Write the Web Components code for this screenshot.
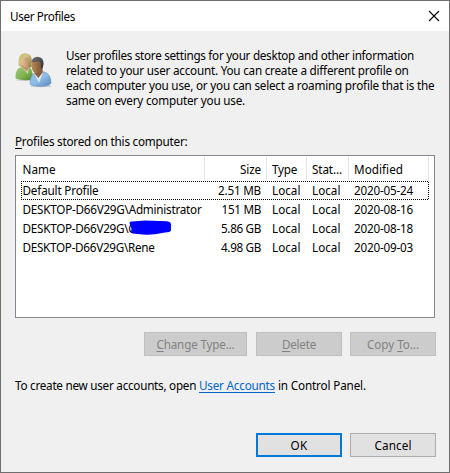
<!DOCTYPE html>
<html lang="en">
<head>
<meta charset="utf-8">
<title>User Profiles</title>
<style>
html,body{margin:0;padding:0;width:450px;height:473px;overflow:hidden;background:#f0f0f0}
</style>
</head>
<body>
<profiles-dialog></profiles-dialog>
<script>
const shadow = (el, html) => { el.attachShadow({mode: 'open'}).innerHTML = html; };

/* A run of text tracked so that it fills the width given in "w". */
customElements.define('ui-text', class extends HTMLElement {
  connectedCallback() {
    if (this.shadowRoot) return;
    shadow(this, '<style>:host{display:inline-block;white-space:pre;line-height:inherit}</style><span><slot></slot></span>');
    const w = +this.getAttribute('w');
    if (!w) return;
    const natural = this.shadowRoot.querySelector('span').getBoundingClientRect().width;
    this.style.letterSpacing = ((w - natural) / this.textContent.length).toFixed(3) + 'px';
  }
});

customElements.define('title-bar', class extends HTMLElement {
  connectedCallback() {
    shadow(this, `<style>
      :host{display:flex;align-items:center;justify-content:space-between;height:30px;background:#fff;padding:0 9px 0 9px;box-sizing:border-box}
      svg{display:block}
    </style><slot></slot>
    <svg width="12" height="12" viewBox="0 0 12 12"><path d="M1 1L11 11M11 1L1 11" stroke="#000" stroke-width="1.1" fill="none"/></svg>`);
  }
});

customElements.define('users-icon', class extends HTMLElement {
  connectedCallback() {
    shadow(this, `<style>:host{display:block;width:40px;height:38px}svg{display:block}</style>
    <svg width="40" height="38" viewBox="0 0 40 38">
      <defs>
        <linearGradient id="g" x1="0" y1="0" x2="1" y2="1"><stop offset="0" stop-color="#a5cb7c"/><stop offset=".6" stop-color="#7cb04c"/><stop offset="1" stop-color="#4d7c2b"/></linearGradient>
        <linearGradient id="b" x1="0" y1="0" x2="1" y2="1"><stop offset="0" stop-color="#8fbbe8"/><stop offset=".5" stop-color="#90bce8"/><stop offset="1" stop-color="#5686b8"/></linearGradient>
        <linearGradient id="h" x1="0" y1="0" x2="1" y2="1"><stop offset="0" stop-color="#c9b768"/><stop offset=".4" stop-color="#d3c48a"/><stop offset="1" stop-color="#8c7630"/></linearGradient>
        <linearGradient id="f" x1="0" y1="0" x2="1" y2="0"><stop offset="0" stop-color="#e6bd98"/><stop offset="1" stop-color="#b98d68"/></linearGradient>
        <linearGradient id="m" x1="0" y1="0" x2="1" y2="0"><stop offset="0" stop-color="#b98858"/><stop offset="1" stop-color="#795233"/></linearGradient>
        <linearGradient id="d" x1="0" y1="0" x2="1" y2="1"><stop offset="0" stop-color="#747474"/><stop offset="1" stop-color="#2e2e2e"/></linearGradient>
      </defs>
      <ellipse cx="10" cy="28" rx="9" ry="1" fill="#999" opacity=".35"/>
      <path d="M.7 26.5Q-.3 18 5 15.5L14 15Q18 17 18 27Q9 29.6 .7 26.5Z" fill="url(#g)"/>
      <path d="M7 15.5L13.5 15L13 22Z" fill="#d5dfc8"/>
      <path d="M3.5 13.5Q2.6 1.4 10 1.2Q16.8 1.2 16.8 8L16.6 15Q8 17.5 3.5 13.5Z" fill="url(#h)"/>
      <path d="M8 12H13.5V16L12 19.5L7.5 15.8Z" fill="#c0906a"/>
      <path d="M6.6 8Q9.5 7.4 11.2 5Q14.2 6 14.2 9Q14.2 15 10.6 15.3Q6.5 14.8 6.6 8Z" fill="url(#f)"/>
      <ellipse cx="26" cy="34" rx="10.6" ry="1.2" fill="#888" opacity=".45"/>
      <path d="M15.3 32.5Q14.5 24 19.5 21L29 19.8Q36 22 36 31Q35 34 26 34.3Q18 34.3 15.3 32.5Z" fill="url(#b)" stroke="#6b95c2" stroke-width=".6"/>
      <path d="M19.2 21.5L28 20.2L24 31Z" fill="#dfeaf4"/>
      <path d="M20 17H27.6V20.5L23.4 26L19.6 21.5Z" fill="#8b5d39"/>
      <ellipse cx="22" cy="14" rx="5.4" ry="7.4" fill="url(#m)"/>
      <path d="M16.4 10.6Q17 4.8 22.6 4.7Q28.8 5.2 28.6 12L27.4 17L25.9 16V12L24.4 9.2Q20 10 16.4 10.6Z" fill="url(#d)"/>
    </svg>`);
  }
});

customElements.define('push-button', class extends HTMLElement {
  connectedCallback() {
    shadow(this, `<style>
      :host{display:flex;align-items:center;justify-content:center;box-sizing:border-box;width:86px;height:24px;background:#e1e1e1;border:1px solid #adadad;line-height:16px}
      :host([wide]){width:103px}
      :host([default]){border:2px solid #0078d7}
      :host([disabled]){background:#ccc;border-color:#bfbfbf;color:#838383}
    </style><slot></slot>`);
  }
});

customElements.define('profile-row', class extends HTMLElement {
  connectedCallback() {
    shadow(this, `<style>
      :host{display:grid;grid-template-columns:183px 62px 40px 42px 80px;justify-items:start;height:19px;line-height:19px;position:relative}
      :host([head]){height:24px;line-height:25px}
      ::slotted(*){padding-left:6px}
      ::slotted(:nth-child(1)){padding-left:1.5px}
      ::slotted(:nth-child(2)){justify-self:end;padding:0 5px 0 0}
      svg{position:absolute;left:0;top:0;display:none;pointer-events:none}
      :host([selected]) svg{display:block}
      .rules{display:none;position:absolute;inset:0;grid-template-columns:184px 62px 40px 42px 80px}
      :host([head]) .rules{display:grid}
      .rules i{border-right:1px solid #e5e5e5}
    </style>
    <div class="rules"><i></i><i></i><i></i><i></i><i></i></div>
    <slot></slot>
    <svg width="408" height="19" shape-rendering="crispEdges"><path d="M0 .5H408M0 18.5H408M.5 0V19M407.5 1V19" fill="none" stroke="#000" stroke-dasharray="1 1"/></svg>`);
  }
});

customElements.define('profile-list', class extends HTMLElement {
  connectedCallback() {
    shadow(this, `<style>
      :host{display:flex;flex-direction:column;box-sizing:border-box;width:420px;height:163px;border:1px solid #828790;background:#fff;padding:1px 5px}
    </style><slot></slot>`);
  }
});

customElements.define('redacted-mark', class extends HTMLElement {
  connectedCallback() {
    shadow(this, `<style>:host{position:absolute;left:107px;top:1px;padding:0!important}svg{display:block}</style>
    <svg width="44" height="16" viewBox="0 0 44 16"><path d="M1.5 3Q1 1.2 4 1.4L17 .6L39 1.2Q43 1.7 43 4.5V10.5Q42 12.5 37 12.4L27 14.2Q18 15.2 10 14L4.5 13.5Q2.5 12 3.5 9Z" fill="#00f"/></svg>`);
  }
});

customElements.define('profiles-dialog', class extends HTMLElement {
  connectedCallback() {
    shadow(this, `<style>
      :host{display:flex;flex-direction:column;box-sizing:border-box;width:450px;height:473px;border:1px solid #6e6e6e;background:#f0f0f0;
        font:11.7px/15px "Noto Sans","Open Sans",sans-serif;color:#000}
      .intro{display:flex;padding:17px 0 0 14px;height:79px;box-sizing:content-box}
      users-icon{margin-top:4px;width:51px;flex:none}
      .copy{display:flex;flex-direction:column;align-items:flex-start}
      .label{padding:7px 0 0 14px;height:21px}
      profile-list{margin-left:14px}
      .actions,.footer{display:flex;justify-content:flex-end;padding-right:13px;gap:8px}
      .actions{padding-top:14px}
      .actions push-button:first-child{margin-right:1px}
      .link{padding:22px 0 0 14px;height:17px;display:flex}
      .footer{padding-top:38px}
      u{text-underline-offset:2px;text-decoration-thickness:1px;text-decoration-skip-ink:none}
      .a{color:#0066cc;text-decoration:underline;text-underline-offset:2px;text-decoration-thickness:1px;text-decoration-skip-ink:none}
    </style>
    <title-bar><ui-text w="65">User Profiles</ui-text></title-bar>
    <div class="intro"><users-icon></users-icon>
      <div class="copy">
        <ui-text w="348">User profiles store settings for your desktop and other information</ui-text>
        <ui-text w="342.5">related to your user account. You can create a different profile on</ui-text>
        <ui-text w="368.5">each computer you use, or you can select a roaming profile that is the</ui-text>
        <ui-text w="179">same on every computer you use.</ui-text>
      </div>
    </div>
    <div class="label"><ui-text w="172.5"><u>P</u>rofiles stored on this computer:</ui-text></div>
    <profile-list>
      <profile-row head><ui-text w="33">Name</ui-text><ui-text w="21">Size</ui-text><ui-text w="25">Type</ui-text><ui-text w="30">Stat...</ui-text><ui-text w="49">Modified</ui-text></profile-row>
      <profile-row selected><ui-text w="76">Default Profile</ui-text><ui-text w="43">2.51 MB</ui-text><ui-text w="28.5">Local</ui-text><ui-text w="28.5">Local</ui-text><ui-text w="59">2020-05-24</ui-text></profile-row>
      <profile-row><ui-text w="179">DESKTOP-D66V29G\\Administrator</ui-text><ui-text w="39.5">151 MB</ui-text><ui-text w="28.5">Local</ui-text><ui-text w="28.5">Local</ui-text><ui-text w="59">2020-08-16</ui-text></profile-row>
      <profile-row><ui-text w="113">DESKTOP-D66V29G\\C</ui-text><ui-text w="40">5.86 GB</ui-text><ui-text w="28.5">Local</ui-text><ui-text w="28.5">Local</ui-text><ui-text w="59">2020-08-18</ui-text><redacted-mark></redacted-mark></profile-row>
      <profile-row><ui-text w="132">DESKTOP-D66V29G\\Rene</ui-text><ui-text w="40">4.98 GB</ui-text><ui-text w="28.5">Local</ui-text><ui-text w="28.5">Local</ui-text><ui-text w="59">2020-09-03</ui-text></profile-row>
    </profile-list>
    <div class="actions">
      <push-button wide disabled><ui-text w="78"><u>C</u>hange Type...</ui-text></push-button>
      <push-button disabled><ui-text w="34"><u>D</u>elete</ui-text></push-button>
      <push-button disabled><ui-text w="52">Copy <u>T</u>o...</ui-text></push-button>
    </div>
    <div class="link"><ui-text w="184">To create new user accounts, open </ui-text><ui-text w="76" class="a">User Accounts</ui-text><ui-text w="91"> in Control Panel.</ui-text></div>
    <div class="footer">
      <push-button default><ui-text w="17">OK</ui-text></push-button>
      <push-button><ui-text w="37">Cancel</ui-text></push-button>
    </div>`);
  }
});
</script>
</body>
</html>
